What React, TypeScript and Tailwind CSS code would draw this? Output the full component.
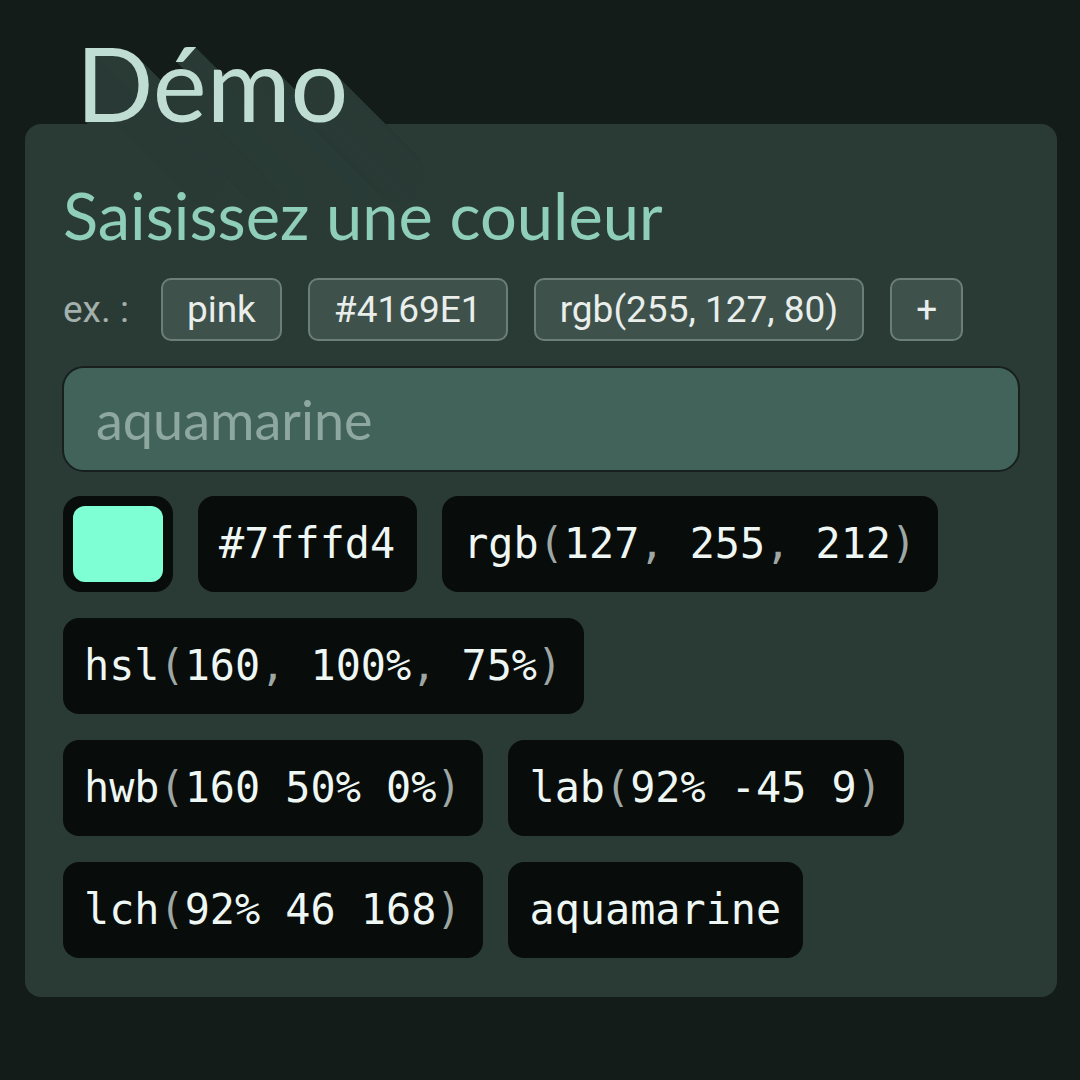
import React from 'react';

const examples = ['pink', '#4169E1', 'rgb(255, 127, 80)', '+'];

// value chips, punctuation is dimmed
const values: string[] = [
  '#7fffd4',
  'rgb(127, 255, 212)',
  'hsl(160, 100%, 75%)',
  'hwb(160 50% 0%)',
  'lab(92% -45 9)',
  'lch(92% 46 168)',
  'aquamarine',
];

function Code({ text }: { text: string }) {
  const parts = text.split(/([(),])/);
  return (
    <div className="flex h-[96px] items-center rounded-[16px] bg-[#080c0a] pl-[21px] pr-[22px] font-['DejaVu_Sans_Mono',monospace] text-[41.8px] whitespace-pre text-[#eef7f3]">
      {parts.map((p, i) =>
        /^[(),]$/.test(p) ? (
          <span key={i} className="text-[#9ea7a3]">
            {p}
          </span>
        ) : (
          <span key={i}>{p}</span>
        )
      )}
    </div>
  );
}

export default function App() {
  return (
    <div className="min-h-[1080px] w-full bg-[#141c19] pt-[41px] pb-[40px]">
      <div className="pl-[76px] font-['Lato',sans-serif] text-[102px] leading-[83px] text-[#bfddd3] [text-shadow:1px_1px_#2a3b36,2px_2px_#2a3b36,3px_3px_#2a3b36,4px_4px_#2a3b36,5px_5px_#2a3b36,6px_6px_#2a3b36,7px_7px_#2a3b36,8px_8px_#2a3b36,9px_9px_#2a3b36,10px_10px_#2a3b36,11px_11px_#2a3b36,12px_12px_#2a3b36,13px_13px_#2a3b36,14px_14px_#2a3b36,15px_15px_#2a3b36,16px_16px_#2a3b36,17px_17px_#2a3b36,18px_18px_#2a3b36,19px_19px_#2a3b36,20px_20px_#2a3b36,21px_21px_#2a3b36,22px_22px_#2a3b36,23px_23px_#2a3b36,24px_24px_#2a3b36,25px_25px_#2a3b36,26px_26px_#2a3b36,27px_27px_#2a3b36,28px_28px_#2a3b36,29px_29px_#2a3b36,30px_30px_#2a3b36,31px_31px_#2a3b36,32px_32px_#2a3b36,33px_33px_#2a3b36,34px_34px_#2a3b36,35px_35px_#2a3b36,36px_36px_#2a3b36,37px_37px_#2a3b36,38px_38px_#2a3b36,39px_39px_#2a3b36,40px_40px_#2a3b36,41px_41px_#2a3b36,42px_42px_#2a3b36,43px_43px_#2a3b36,44px_44px_#2a3b36,45px_45px_#2a3b36,46px_46px_#2a3b36,47px_47px_#2a3b36,48px_48px_#2a3b36,49px_49px_#2a3b36,50px_50px_#2a3b36,51px_51px_#2a3b36,52px_52px_#2a3b36,53px_53px_#2a3b36,54px_54px_#2a3b36,55px_55px_#2a3b36,56px_56px_#2a3b36,57px_57px_#2a3b36,58px_58px_#2a3b36,59px_59px_#2a3b36,60px_60px_#2a3b36,61px_61px_#2a3b36,62px_62px_#2a3b36,63px_63px_#2a3b36,64px_64px_#2a3b36,65px_65px_#2a3b36,66px_66px_#2a3b36,67px_67px_#2a3b36,68px_68px_#2a3b36,69px_69px_#2a3b36,70px_70px_#2a3b36,71px_71px_#2a3b36,72px_72px_#2a3b36,73px_73px_#2a3b36,74px_74px_#2a3b36,75px_75px_#2a3b36,76px_76px_#2a3b36,77px_77px_#2a3b36,78px_78px_#2a3b36,79px_79px_#2a3b36,80px_80px_#2a3b36]">
        Démo
      </div>

      <div className="ml-[25px] w-[1032px] rounded-[16px] bg-[#2a3b36] px-[38px] pt-[52px] pb-[39px]">
        <h2 className="font-['Lato',sans-serif] text-[65px] leading-[1.2] text-[#8fcfb9]">
          Saisissez une couleur
        </h2>

        <div className="mt-[24px] flex items-center gap-[26px] font-['Roboto',sans-serif] text-[37px]">
          <span className="mr-[6px] text-[#a4b0ab]">ex. :</span>
          {examples.map((e) => (
            <button
              key={e}
              className="flex h-[63px] items-center rounded-[10px] border-2 border-[#6c7e78] bg-[#3e524b] px-[24px] text-[#e9eeeb]"
            >
              {e}
            </button>
          ))}
        </div>

        <input
          className="mt-[25px] block h-[106px] w-[958px] -ml-px rounded-[22px] border-2 border-[#17201d] bg-[#42635a] px-[32px] font-['Lato',sans-serif] text-[54px] text-[#e9eeeb] outline-none placeholder:text-[#8ea89f]"
          placeholder="aquamarine"
        />

        <div className="mt-[24px] flex flex-wrap gap-x-[25px] gap-y-[26px]">
          <div className="flex h-[96px] w-[110px] rounded-[18px] bg-[#080c0a] p-[10px]">
            <div className="h-full w-full rounded-[12px] bg-[#7fffd4]" />
          </div>
          {values.map((v) => (
            <Code key={v} text={v} />
          ))}
        </div>
      </div>
    </div>
  );
}
